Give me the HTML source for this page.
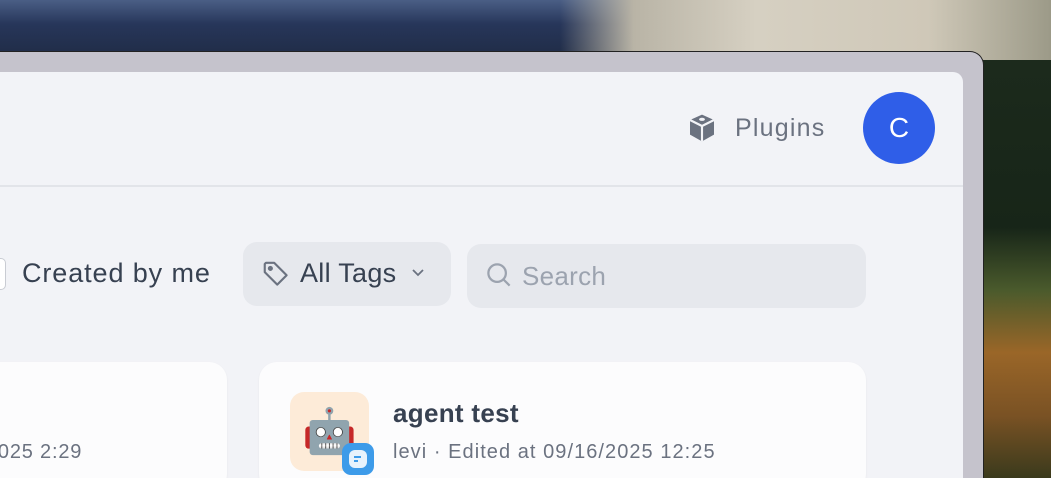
<!DOCTYPE html>
<html><head><meta charset="utf-8"><style>
*{margin:0;padding:0;box-sizing:border-box}
html,body{width:1051px;height:478px;overflow:hidden}
body{position:relative;font-family:"Liberation Sans",sans-serif;
background:linear-gradient(180deg,#5d6e8c 0%,#2e3d5c 8%,#1f2d45 14%,#182a2a 30%,#1c2b1c 50%,#3f5a2a 62%,#8a5a24 75%,#6b4a20 88%,#2d3a1c 100%);}
.sky{position:absolute;left:0;top:0;width:1051px;height:60px;background:linear-gradient(180deg,#4a5e85 0%,#27365a 40%,#1f2b44 100%)}
.sky2{position:absolute;left:560px;top:0;width:491px;height:60px;background:linear-gradient(90deg,rgba(200,195,180,0) 0%,#b9b4a6 15%,#d6d0c2 40%,#cfc8b8 75%,#9c9a88 100%)}
.fog{position:absolute;left:983px;top:60px;width:68px;height:418px;background:linear-gradient(180deg,#1c2a1c 0%,#172518 40%,#4a5a2c 55%,#9a6628 70%,#7a5224 85%,#3a3a1c 100%)}
.frame{position:absolute;left:-20px;top:51px;width:1004px;height:440px;background:#c5c3cc;border-radius:0 14px 0 0;border-top:1px solid #222;border-right:1px solid #222}
.page{position:absolute;left:0;top:72px;width:963px;height:420px;background:#f2f3f7;border-radius:0 10px 0 0}
.hdr{position:absolute;left:0;top:185px;width:963px;height:2px;background:#e2e4e9}
.t{position:absolute;white-space:nowrap}
</style></head><body>
<div class="sky"></div><div class="sky2"></div><div class="fog"></div>
<div class="frame"></div>
<div class="page"></div>
<div class="hdr"></div>
<svg class="t" style="left:686px;top:112px" width="32" height="32" viewBox="0 0 24 24"><path d="M12 2l9 4v11l-9 5-9-5V6z" fill="#6b7280"/><path d="M3 6l9 4.5L21 6M12 10.5V22" stroke="#f2f3f7" stroke-width="1.6" fill="none"/><ellipse cx="12" cy="5.5" rx="2.2" ry="1.2" fill="#f2f3f7"/></svg>
<div class="t" style="left:735px;top:114px;font-size:25px;letter-spacing:1.2px;color:#6b7280">Plugins</div>
<div class="t" style="left:863px;top:92px;width:72px;height:72px;border-radius:50%;background:#2f5ee8;color:#fff;font-size:28px;line-height:72px;text-align:center">C</div>
<div class="t" style="left:-14px;top:258px;width:20px;height:32px;border:1.5px solid #c9ccd3;border-radius:5px;background:#fff"></div>
<div class="t" style="left:22px;top:258px;font-size:27px;letter-spacing:0.9px;color:#374151">Created by me</div>
<div class="t" style="left:243px;top:242px;width:208px;height:64px;background:#e6e8ed;border-radius:14px"></div>
<svg class="t" style="left:261px;top:259px" width="30" height="30" viewBox="0 0 24 24" fill="none" stroke="#6b7280" stroke-width="1.7" stroke-linejoin="round"><path d="M3 4v6.5l10 10 7.5-7.5-10-10H4z"/><circle cx="7.5" cy="7.5" r="1.2" fill="#6b7280"/></svg>
<div class="t" style="left:300px;top:258px;font-size:27px;letter-spacing:0.3px;color:#374151">All Tags</div>
<svg class="t" style="left:410px;top:267px" width="16" height="12" viewBox="0 0 16 12"><path d="M3 3l5 5 5-5" stroke="#6b7280" stroke-width="1.8" fill="none"/></svg>
<div class="t" style="left:467px;top:244px;width:399px;height:64px;background:#e6e8ed;border-radius:14px"></div>
<svg class="t" style="left:484px;top:260px" width="30" height="30" viewBox="0 0 24 24" fill="none" stroke="#9ca3af" stroke-width="1.8"><circle cx="10.5" cy="10.5" r="7"/><path d="M15.5 15.5l5 5"/></svg>
<div class="t" style="left:522px;top:261px;font-size:26px;letter-spacing:0.3px;color:#9ca3af">Search</div>
<div class="t" style="left:-20px;top:362px;width:247px;height:130px;background:#fcfcfd;border-radius:18px;box-shadow:0 1px 2px rgba(0,0,0,.05)"></div>
<div class="t" style="left:-14px;top:441px;font-size:20px;letter-spacing:0.8px;color:#6b7280">2025 2:29</div>
<div class="t" style="left:259px;top:362px;width:607px;height:130px;background:#fcfcfd;border-radius:18px;box-shadow:0 1px 2px rgba(0,0,0,.05)"></div>
<div class="t" style="left:290px;top:392px;width:79px;height:79px;background:#fdebd8;border-radius:14px;font-size:44px;line-height:79px;text-align:center;font-family:'Noto Color Emoji',sans-serif">🤖</div>
<div class="t" style="left:342px;top:443px;width:32px;height:32px;background:#3d9be9;border-radius:9px"><div style="position:absolute;left:7px;top:7px;width:18px;height:18px;background:#e7f2fc;border-radius:6px"></div><div style="position:absolute;left:12px;top:13px;width:7px;height:2px;background:#3d9be9"></div><div style="position:absolute;left:12px;top:17px;width:4px;height:2px;background:#3d9be9"></div></div>
<div class="t" style="left:393px;top:398px;font-size:26px;font-weight:bold;letter-spacing:0.3px;color:#374151">agent test</div>
<div class="t" style="left:393px;top:441px;font-size:20px;letter-spacing:1.05px;color:#6b7280">levi · Edited at 09/16/2025 12:25</div>
</body></html>
